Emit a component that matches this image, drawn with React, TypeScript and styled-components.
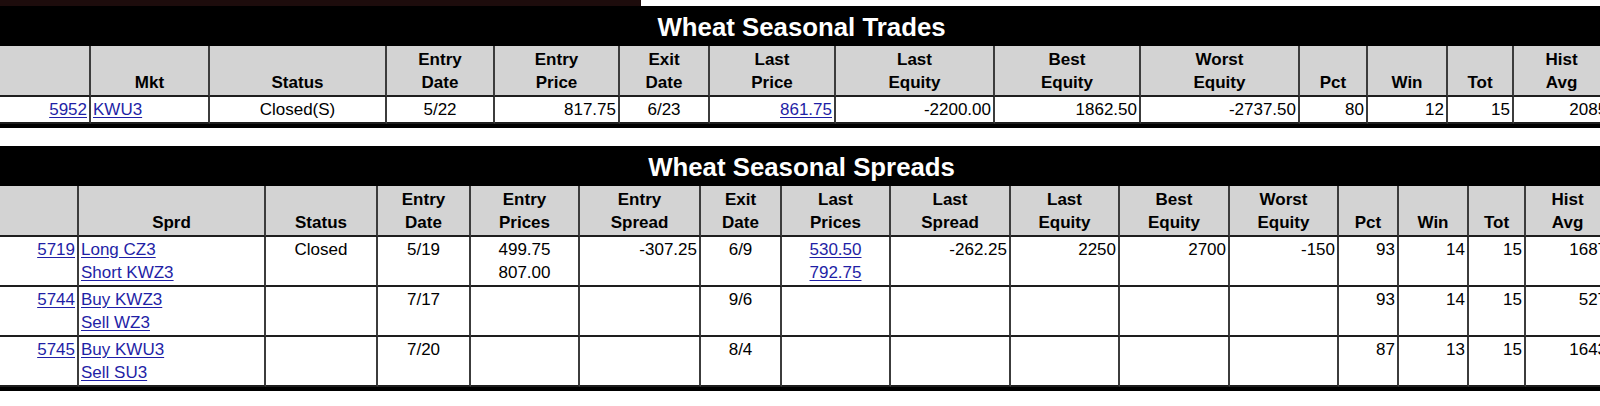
import React from 'react';
import styled, { createGlobalStyle } from 'styled-components';

type Align = 'left' | 'center' | 'right';

interface Column {
  label: string[];
  width: number;
  align: Align;
}

interface CellData {
  lines: string[];
  link?: boolean;
}

interface SectionProps {
  title: string;
  columns: Column[];
  rows: CellData[][];
}

const GlobalStyle = createGlobalStyle`
  html, body {
    margin: 0;
    padding: 0;
    background: #fff;
    overflow: hidden;
  }
  body {
    font-family: "Liberation Sans", Arial, Helvetica, sans-serif;
    color: #000;
  }
`;

const Page = styled.div`
  width: 1600px;
  overflow: hidden;
`;

const TopStrip = styled.div`
  width: 641px;
  height: 6px;
  background: #1d0c0c;
`;

// page is scrolled a few pixels sideways, so the tables start left of the edge
const Table = styled.table`
  width: 1615px;
  margin: 0 0 18px -6px;
  table-layout: fixed;
  border-collapse: separate;
  border-spacing: 0;
  border-bottom: 4px solid #000;
`;

const TitleCell = styled.th`
  box-sizing: border-box;
  height: 40px;
  padding: 3px 0 0;
  background: #000;
  color: #fff;
  font-size: 25.8px;
  font-weight: bold;
  line-height: 37px;
  text-align: center;
  vertical-align: middle;
`;

const HeadCell = styled.th<{ $last: boolean }>`
  box-sizing: border-box;
  height: 51px;
  padding: 1px 2px;
  background: #d3d3d3;
  font-size: 17px;
  font-weight: bold;
  line-height: 23px;
  text-align: center;
  vertical-align: bottom;
  white-space: nowrap;
  overflow: hidden;
  border-right: ${(p) => (p.$last ? 'none' : '2px solid #3c3c3c')};
  border-bottom: 2px solid #1e1e1e;
`;

const Cell = styled.td<{ $align: Align; $last: boolean }>`
  padding: 1px 2px;
  font-size: 17px;
  line-height: 23px;
  text-align: ${(p) => p.$align};
  vertical-align: top;
  white-space: nowrap;
  overflow: hidden;
  border-right: ${(p) => (p.$last ? 'none' : '2px solid #3c3c3c')};
  border-bottom: 2px solid #1e1e1e;
`;

const RowLink = styled.a`
  color: #1f1fa6;
  text-decoration: underline;
  text-underline-offset: 2px;
`;

const col = (label: string[], width: number, align: Align): Column => ({ label, width, align });
const t = (...lines: string[]): CellData => ({ lines });
const a = (...lines: string[]): CellData => ({ lines, link: true });

const tradeColumns: Column[] = [
  col([], 97, 'right'),
  col(['Mkt'], 119, 'left'),
  col(['Status'], 177, 'center'),
  col(['Entry', 'Date'], 108, 'center'),
  col(['Entry', 'Price'], 125, 'right'),
  col(['Exit', 'Date'], 90, 'center'),
  col(['Last', 'Price'], 126, 'right'),
  col(['Last', 'Equity'], 159, 'right'),
  col(['Best', 'Equity'], 146, 'right'),
  col(['Worst', 'Equity'], 159, 'right'),
  col(['Pct'], 68, 'right'),
  col(['Win'], 80, 'right'),
  col(['Tot'], 66, 'right'),
  col(['Hist', 'Avg'], 95, 'right'),
];

const tradeRows: CellData[][] = [
  [
    a('5952'), a('KWU3'), t('Closed(S)'), t('5/22'), t('817.75'), t('6/23'), a('861.75'),
    t('-2200.00'), t('1862.50'), t('-2737.50'), t('80'), t('12'), t('15'), t('2085'),
  ],
];

const spreadColumns: Column[] = [
  col([], 85, 'right'),
  col(['Sprd'], 187, 'left'),
  col(['Status'], 112, 'center'),
  col(['Entry', 'Date'], 93, 'center'),
  col(['Entry', 'Prices'], 109, 'center'),
  col(['Entry', 'Spread'], 121, 'right'),
  col(['Exit', 'Date'], 81, 'center'),
  col(['Last', 'Prices'], 109, 'center'),
  col(['Last', 'Spread'], 120, 'right'),
  col(['Last', 'Equity'], 109, 'right'),
  col(['Best', 'Equity'], 110, 'right'),
  col(['Worst', 'Equity'], 109, 'right'),
  col(['Pct'], 60, 'right'),
  col(['Win'], 70, 'right'),
  col(['Tot'], 57, 'right'),
  col(['Hist', 'Avg'], 83, 'right'),
];

const empty = t();

const spreadRows: CellData[][] = [
  [
    a('5719'), a('Long CZ3', 'Short KWZ3'), t('Closed'), t('5/19'), t('499.75', '807.00'), t('-307.25'),
    t('6/9'), a('530.50', '792.75'), t('-262.25'), t('2250'), t('2700'), t('-150'),
    t('93'), t('14'), t('15'), t('1687'),
  ],
  [
    a('5744'), a('Buy KWZ3', 'Sell WZ3'), empty, t('7/17'), empty, empty,
    t('9/6'), empty, empty, empty, empty, empty,
    t('93'), t('14'), t('15'), t('527'),
  ],
  [
    a('5745'), a('Buy KWU3', 'Sell SU3'), empty, t('7/20'), empty, empty,
    t('8/4'), empty, empty, empty, empty, empty,
    t('87'), t('13'), t('15'), t('1643'),
  ],
];

const CellContent: React.FC<{ data: CellData }> = ({ data }) => (
  <>
    {data.lines.map((line, i) => (
      <React.Fragment key={i}>
        {i > 0 ? <br /> : null}
        {data.link ? <RowLink href="#">{line}</RowLink> : line}
      </React.Fragment>
    ))}
  </>
);

const SeasonalTable: React.FC<SectionProps> = ({ title, columns, rows }) => {
  const lastIndex = columns.length - 1;
  return (
    <Table>
      <colgroup>
        {columns.map((c, i) => (
          <col key={i} style={{ width: c.width }} />
        ))}
      </colgroup>
      <thead>
        <tr>
          <TitleCell colSpan={columns.length}>{title}</TitleCell>
        </tr>
        <tr>
          {columns.map((c, i) => (
            <HeadCell key={i} $last={i === lastIndex}>
              {c.label.map((line, j) => (
                <React.Fragment key={j}>
                  {j > 0 ? <br /> : null}
                  {line}
                </React.Fragment>
              ))}
            </HeadCell>
          ))}
        </tr>
      </thead>
      <tbody>
        {rows.map((row, r) => (
          <tr key={r}>
            {row.map((cell, i) => (
              <Cell key={i} $align={columns[i].align} $last={i === lastIndex}>
                <CellContent data={cell} />
              </Cell>
            ))}
          </tr>
        ))}
      </tbody>
    </Table>
  );
};

export default function App() {
  return (
    <Page>
      <GlobalStyle />
      <TopStrip />
      <SeasonalTable title="Wheat Seasonal Trades" columns={tradeColumns} rows={tradeRows} />
      <SeasonalTable title="Wheat Seasonal Spreads" columns={spreadColumns} rows={spreadRows} />
    </Page>
  );
}
